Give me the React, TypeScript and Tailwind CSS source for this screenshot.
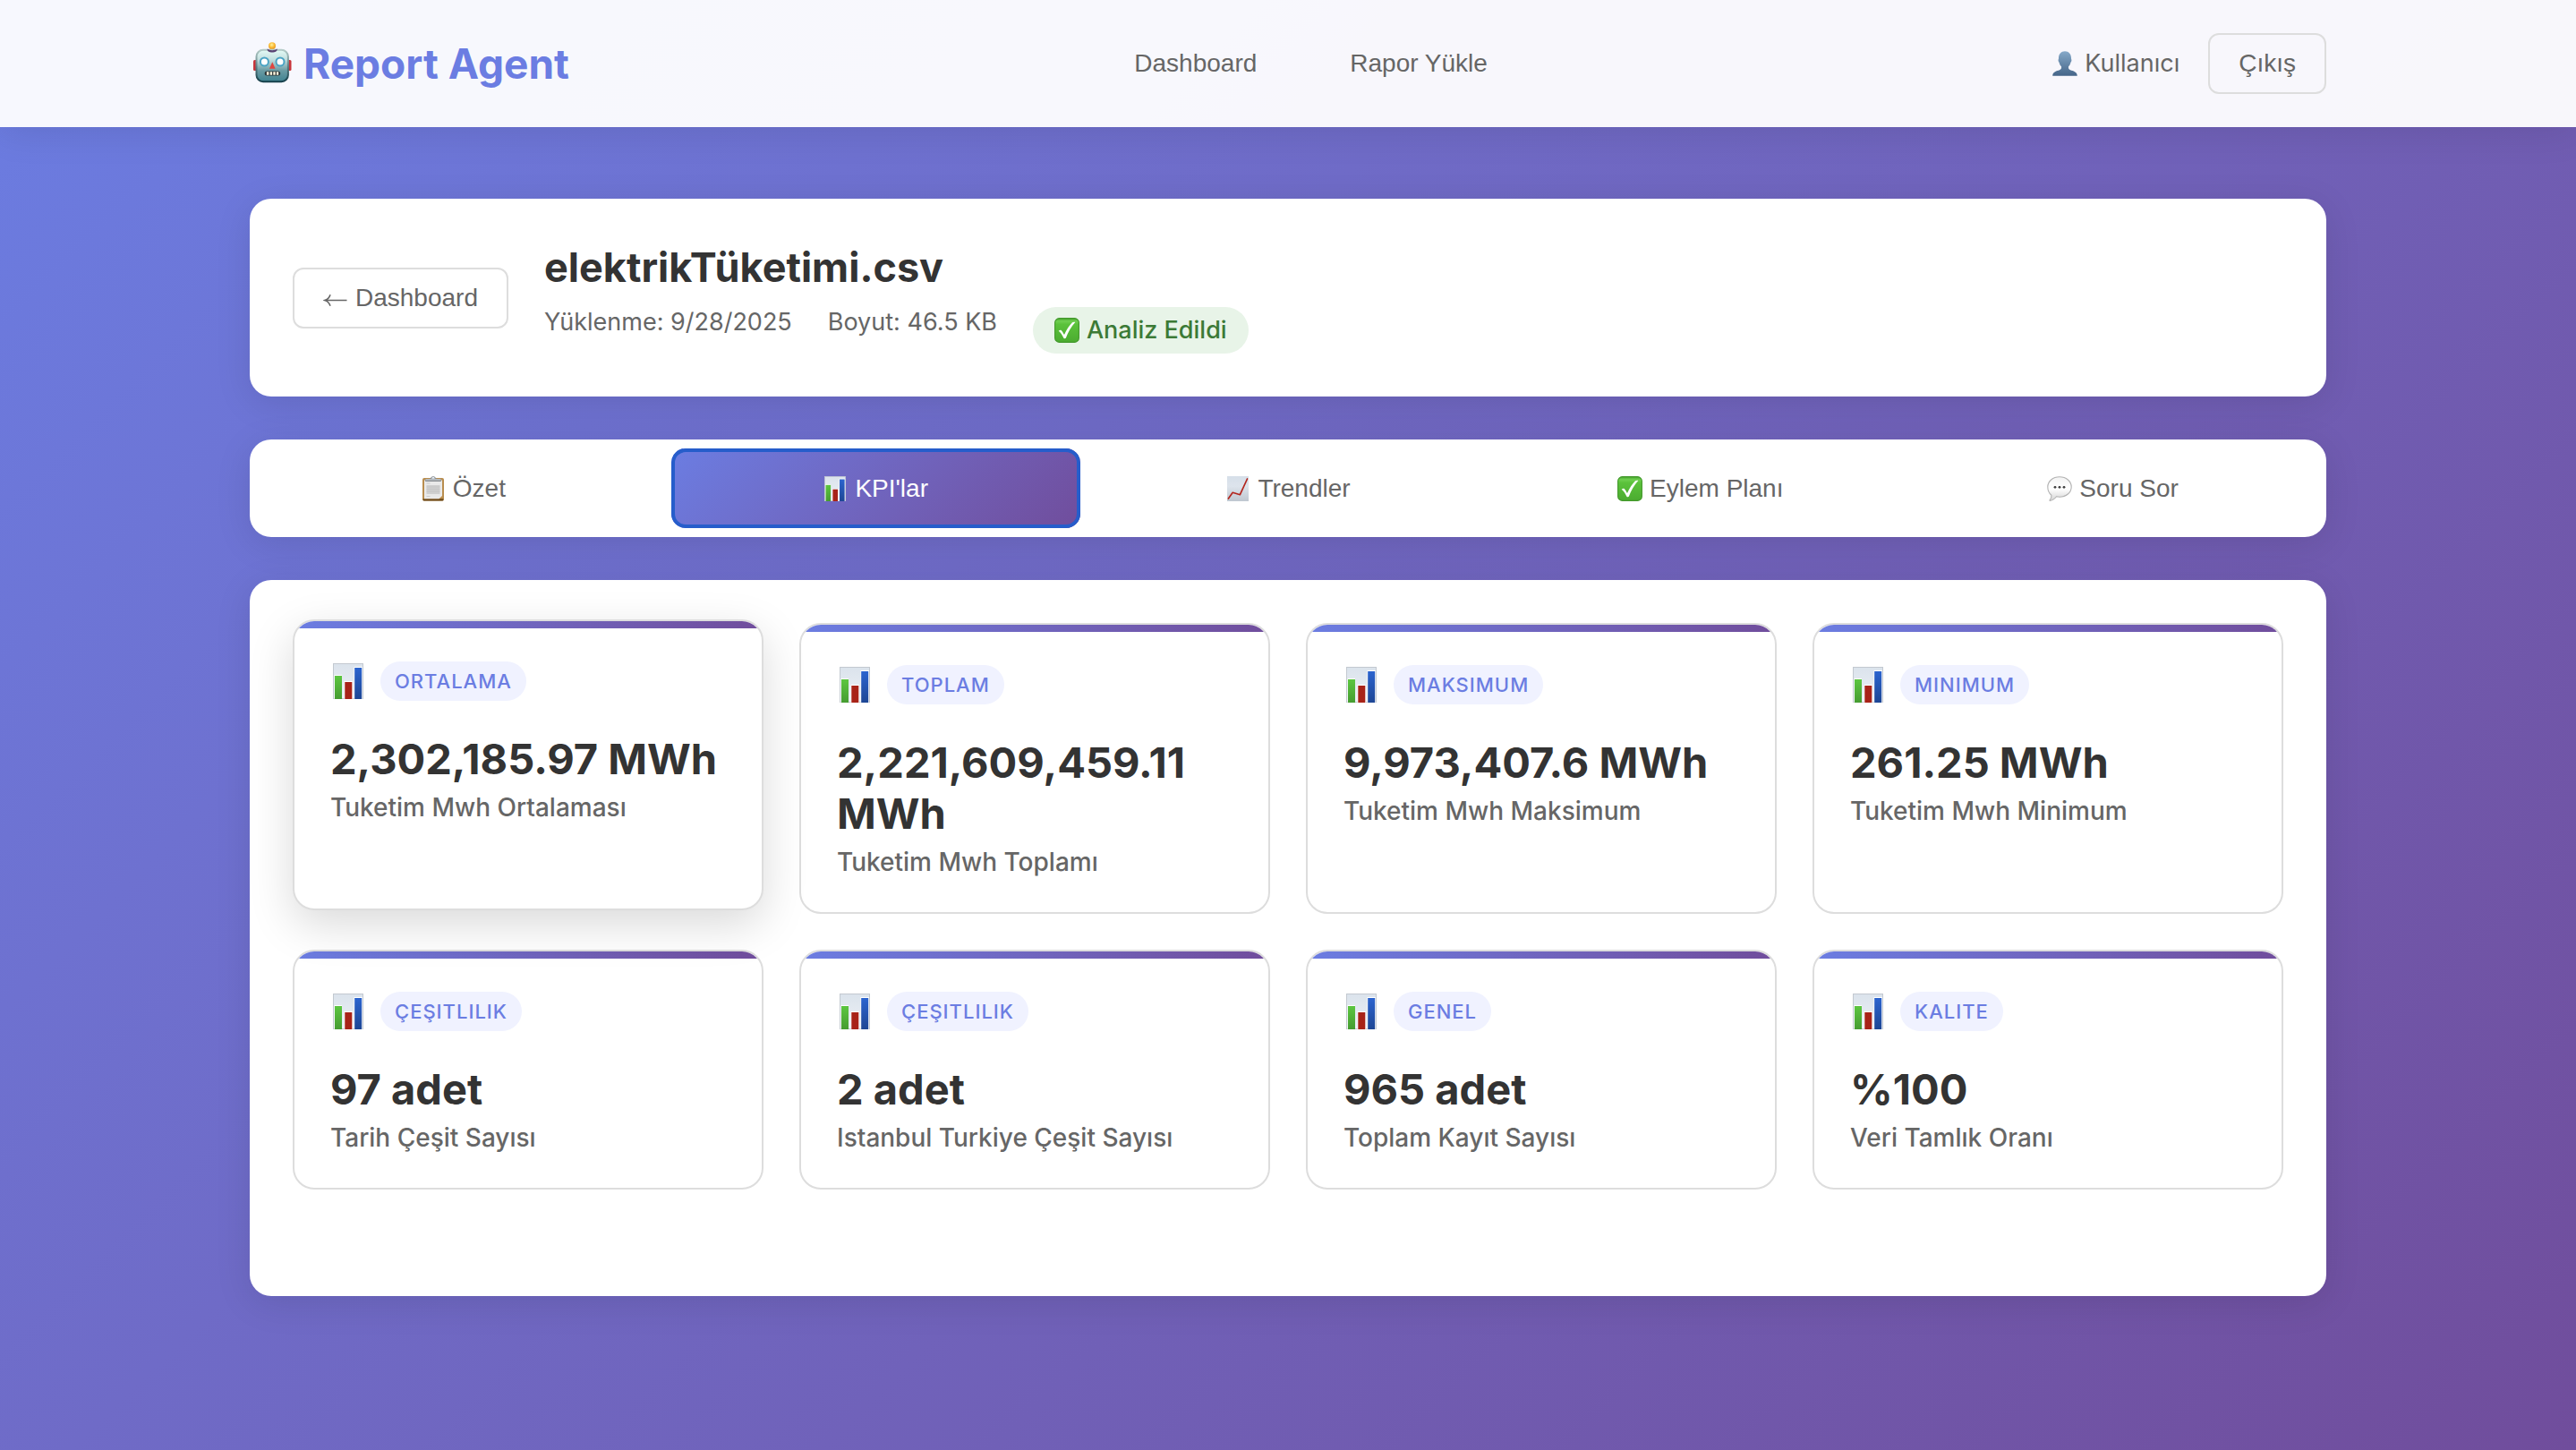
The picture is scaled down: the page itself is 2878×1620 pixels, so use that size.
import type { ReactNode } from 'react';

function RobotIcon() {
  return (
    <svg viewBox="0 0 48 48" className="size-12 shrink-0" aria-hidden="true">
      <defs>
        <linearGradient id="robotFace" x1="0" y1="0" x2="0" y2="1">
          <stop offset="0" stopColor="#e4fbf6" />
          <stop offset="0.3" stopColor="#c3dfdf" />
          <stop offset="0.65" stopColor="#6a9ba3" />
          <stop offset="1" stopColor="#3f8290" />
        </linearGradient>
        <linearGradient id="robotEdge" x1="0" y1="0" x2="0" y2="1">
          <stop offset="0" stopColor="#b4cbc8" />
          <stop offset="0.6" stopColor="#4d747b" />
          <stop offset="1" stopColor="#16404b" />
        </linearGradient>
        <radialGradient id="robotLamp" cx="0.45" cy="0.35" r="0.7">
          <stop offset="0" stopColor="#fff3a0" />
          <stop offset="0.5" stopColor="#fbbc35" />
          <stop offset="1" stopColor="#e08a1c" />
        </radialGradient>
      </defs>
      <circle cx="25" cy="4.300" r="4" fill="url(#robotLamp)" />
      <rect x="4" y="20" width="5" height="12" rx="1.500" fill="#c8343a" />
      <rect x="41.500" y="20" width="5" height="12" rx="1.500" fill="#c8343a" />
      <rect x="7.500" y="8.800" width="35.400" height="35.400" rx="7.500" fill="url(#robotFace)" stroke="url(#robotEdge)" strokeWidth="2" />
      <path d="M19.700 7.500c1.500 1.200 3.300 1.700 5.450 1.700s3.950-.5 5.450-1.700c.6 2.600-2.200 4-5.450 4s-6.050-1.400-5.450-4Z" fill="#5a4373" />
      <circle cx="16.400" cy="22" r="4.500" fill="#fff" stroke="#4aa3c4" strokeWidth="2" />
      <circle cx="34" cy="22" r="4.500" fill="#fff" stroke="#4aa3c4" strokeWidth="2" />
      <path d="m25.300 22.200 3.300 7.600H22Z" fill="#e0453f" />
      <rect x="16.700" y="32.500" width="17.500" height="5" rx="2.500" fill="#2b3437" />
      <path d="M18.900 33.300h2.500v3.400h-2.500zM22.700 33.300h2.400v3.400h-2.400zM26.300 33.300h2.400v3.400h-2.400zM29.900 33.300h2.300v3.400h-2.300z" fill="#fff6dc" />
    </svg>
  );
}

function PersonIcon() {
  return (
    <svg viewBox="0 0 28 28" className="size-7 shrink-0" aria-hidden="true">
      <defs>
        <linearGradient id="person" x1="0" y1="0" x2="0" y2="1">
          <stop offset="0" stopColor="#86a9c9" />
          <stop offset="1" stopColor="#456588" />
        </linearGradient>
      </defs>
      <path
        d="M14 .3c4.300 0 7 3.200 7 7.700 0 1.200.5 1.500.4 2.700-.1 1.100-.8 1.500-1.100 2.500-.5 1.900-1.300 3.100-2.300 4.100-.3 1.800.2 3.300 2 4 3.300 1.200 7.500 1.700 7.800 6.400H.2c.3-4.700 4.500-5.200 7.800-6.400 1.800-.7 2.300-2.200 2-4-1-1-1.800-2.200-2.300-4.100-.3-1-1-1.400-1.100-2.500C6.500 9.500 7 9.200 7 8 7 3.500 9.700.3 14 .3Z"
        fill="url(#person)"
      />
    </svg>
  );
}

function ArrowLeftIcon() {
  return (
    <svg viewBox="0 0 28 28" className="size-7 shrink-0" aria-hidden="true">
      <path d="M2.500 16.500h24M8 10.200c-1 3.300-2.800 5.300-6.300 6.300 3.500 1 5.300 3 6.300 6.300" fill="none" stroke="currentColor" strokeWidth="1.600" />
    </svg>
  );
}

function CheckIcon() {
  return (
    <svg viewBox="0 0 28 28" className="size-7 shrink-0" aria-hidden="true">
      <defs>
        <linearGradient id="check" x1="0" y1="0" x2="0" y2="1">
          <stop offset="0" stopColor="#45a52c" />
          <stop offset="0.12" stopColor="#6fcf50" />
          <stop offset="0.25" stopColor="#5bc23b" />
          <stop offset="1" stopColor="#4bab30" />
        </linearGradient>
      </defs>
      <rect x="0.600" y="0.600" width="26.800" height="26.800" rx="5" fill="url(#check)" stroke="#43982c" strokeWidth="1.100" />
      <path d="M4.700 14.800c1-1 2.200-1.500 3-.8 1.100 1 2 2.900 3.300 5C13.800 12.800 16.700 8.600 20 5.300c.6-.6 2.600-.7 3.300-.3-4.700 5-7.900 10.900-10.400 17.500-.4 1-2 1.100-2.500.2-1.800-3.500-3.300-6.300-5.700-7.900Z" fill="#fff" />
    </svg>
  );
}

function ClipboardIcon() {
  return (
    <svg viewBox="0 0 28 28" className="size-7 shrink-0" aria-hidden="true">
      <rect x="2" y="2" width="24" height="25.600" rx="2" fill="#b98d4e" />
      <rect x="2.500" y="25.300" width="23" height="2.200" rx="1" fill="#6d4a1c" />
      <path d="M4 4.500h20V22l-3.500 3.300H4Z" fill="#e9e9e9" />
      <path d="M6.500 10h15v10h-15z" fill="#cfcfcf" />
      <path d="M6.500 8h4M6.500 22.500h4M6.500 12h15M6.500 14.500h15M6.500 17h15" stroke="#c0c0c0" strokeWidth="0.700" />
      <path d="M5 3.200c3 0 5.500 0 6.200-1.200C11.700.8 12.600.2 14 .2s2.300.6 2.800 1.800C17.500 3.200 20 3.200 23 3.200V5c0 .6-.4 1-1 1H6c-.6 0-1-.4-1-1Z" fill="#8b8f94" />
      <path d="M5.500 3.300h17v1.200h-17z" fill="#c9ced3" />
      <path d="M12.300 2.800c0-1.300.6-1.900 1.700-1.900s1.700.6 1.700 1.900Z" fill="#e6eef5" />
    </svg>
  );
}

function BarChartIcon({ className }: { className: string }) {
  return (
    <svg viewBox="0 0 40 40" className={className} aria-hidden="true">
      <defs>
        <linearGradient id="chartPaper" x1="0" y1="0" x2="0" y2="1">
          <stop offset="0" stopColor="#dbe3ec" />
          <stop offset="1" stopColor="#edf1f6" />
        </linearGradient>
        <linearGradient id="barGreen" x1="0" y1="0" x2="0" y2="1">
          <stop offset="0" stopColor="#5cc640" />
          <stop offset="1" stopColor="#469c31" />
        </linearGradient>
        <linearGradient id="barBlue" x1="0" y1="0" x2="0" y2="1">
          <stop offset="0" stopColor="#2c64cf" />
          <stop offset="1" stopColor="#1d4694" />
        </linearGradient>
      </defs>
      <rect x="3.500" y="0.500" width="33" height="39" fill="url(#chartPaper)" stroke="#c3c9d0" />
      <path d="M4.500 13h8.500v27H4.500zM15.500 20H25v20h-9.500zM26.500 4h9.500v36h-9.500z" fill="#fff" />
      <rect x="5" y="14" width="8" height="26" fill="url(#barGreen)" />
      <rect x="16.300" y="21" width="8" height="19" fill="#a82318" />
      <rect x="27.200" y="5" width="8" height="35" fill="url(#barBlue)" />
    </svg>
  );
}

function TrendIcon() {
  return (
    <svg viewBox="0 0 28 28" className="size-7 shrink-0" aria-hidden="true">
      <defs>
        <linearGradient id="trendPaper" x1="0" y1="0" x2="0" y2="1">
          <stop offset="0" stopColor="#d6dfe9" />
          <stop offset="0.4" stopColor="#dde4ec" />
          <stop offset="1" stopColor="#bfc7d0" />
        </linearGradient>
      </defs>
      <rect x="2" y="0" width="24" height="28" fill="url(#trendPaper)" />
      <path d="m3.400 25 4.800-6.700 8.200 2.400L24.500 3" fill="none" stroke="#b3261e" strokeWidth="1.700" strokeLinejoin="round" strokeLinecap="round" />
    </svg>
  );
}

function SpeechIcon() {
  return (
    <svg viewBox="0 0 28 28" className="size-7 shrink-0" aria-hidden="true">
      <defs>
        <linearGradient id="speech" x1="0" y1="0" x2="0" y2="1">
          <stop offset="0" stopColor="#f3f3f3" />
          <stop offset="0.5" stopColor="#ffffff" />
          <stop offset="1" stopColor="#d4d4d4" />
        </linearGradient>
      </defs>
      <path
        d="M14 .8C21.300.8 27.200 5.600 27.200 12S21.300 23.200 14 23.200c-1.200 0-2.400-.1-3.500-.4-1.700 2.400-4.300 4.200-7.200 4.600-.4 0-.5-.4-.2-.7 1.300-1.400 2-3.500 1.800-5.500C2.400 19.200.8 15.900.8 12 .8 5.600 6.700.8 14 .8Z"
        fill="url(#speech)"
        stroke="#b2b2b2"
        strokeWidth="1.100"
      />
      <circle cx="9" cy="12.300" r="1.400" fill="#3c3c3c" />
      <circle cx="14" cy="12.300" r="1.400" fill="#3c3c3c" />
      <circle cx="19" cy="12.300" r="1.400" fill="#3c3c3c" />
    </svg>
  );
}

const tabs: { label: string; icon: ReactNode; active?: boolean }[] = [
  { label: 'Özet', icon: <ClipboardIcon /> },
  { label: "KPI'lar", icon: <BarChartIcon className="size-7 shrink-0" />, active: true },
  { label: 'Trendler', icon: <TrendIcon /> },
  { label: 'Eylem Planı', icon: <CheckIcon /> },
  { label: 'Soru Sor', icon: <SpeechIcon /> },
];

const kpis = [
  { tag: 'ORTALAMA', value: '2,302,185.97 MWh', label: 'Tuketim Mwh Ortalaması', raised: true },
  { tag: 'TOPLAM', value: '2,221,609,459.11 MWh', label: 'Tuketim Mwh Toplamı' },
  { tag: 'MAKSIMUM', value: '9,973,407.6 MWh', label: 'Tuketim Mwh Maksimum' },
  { tag: 'MINIMUM', value: '261.25 MWh', label: 'Tuketim Mwh Minimum' },
  { tag: 'ÇEŞITLILIK', value: '97 adet', label: 'Tarih Çeşit Sayısı' },
  { tag: 'ÇEŞITLILIK', value: '2 adet', label: 'Istanbul Turkiye Çeşit Sayısı' },
  { tag: 'GENEL', value: '965 adet', label: 'Toplam Kayıt Sayısı' },
  { tag: 'KALITE', value: '%100', label: 'Veri Tamlık Oranı' },
];

const outlineButton =
  "flex cursor-pointer items-center gap-2 rounded-xl border-2 border-[#ddd] px-8 py-4 font-['Liberation_Sans',Arial,sans-serif] text-[28px] leading-8 text-[#666]";

function KpiCard({ tag, value, label, raised }: { tag: string; value: string; label: string; raised?: boolean }) {
  return (
    <article
      className={
        'overflow-hidden rounded-3xl border-2 border-[#ddd] bg-white ' +
        (raised ? '-translate-y-1 shadow-[0_16px_50px_rgba(0,0,0,0.15)]' : '')
      }
    >
      <div className="h-2 bg-linear-to-r from-[#6b7de2] to-[#704d9c]" />
      <div className="px-10 pt-8 pb-[38px]">
        <div className="mb-8 flex h-[53px] items-center gap-4">
          <BarChartIcon className="size-10 shrink-0" />
          <span className="rounded-full bg-[#f0f2ff] px-4 py-2 text-[22px] leading-7 font-medium tracking-[1px] text-[#6b7de2]">
            {tag}
          </span>
        </div>
        <p className="mb-2 text-[47px] leading-[57px] font-bold text-[#333]">{value}</p>
        <p className="text-[28px] leading-9 font-medium text-[#666]">{label}</p>
      </div>
    </article>
  );
}

export default function App() {
  return (
    <div className="min-h-screen bg-linear-135 from-[#6b7de2] to-[#704d9c] font-[Inter,sans-serif] text-[27px] leading-[34px] text-[#333]">
      <header className="bg-white/95 shadow-[0_4px_40px_rgba(0,0,0,0.1)]">
        <div className="mx-auto flex max-w-[2400px] items-center justify-between px-10 py-9">
          <a href="#" className="flex items-center gap-3 text-[46px] leading-[70px] font-bold text-[#6b7de2]">
            <RobotIcon />
            Report Agent
          </a>
          <nav className="flex gap-10 font-['Liberation_Sans',Arial,sans-serif] text-[28px] text-[#666]">
            <a href="#" className="px-8">Dashboard</a>
            <a href="#" className="px-8">Rapor Yükle</a>
          </nav>
          <div className="flex items-center gap-8">
            <span className="flex items-center gap-2 text-[#666]">
              <PersonIcon />
              Kullanıcı
            </span>
            <button type="button" className={outlineButton}>Çıkış</button>
          </div>
        </div>
      </header>

      <main className="mx-auto flex max-w-[2400px] flex-col gap-12 px-10 py-20">
        <section className="flex items-center gap-10 rounded-3xl bg-white p-12 shadow-[0_8px_40px_rgba(0,0,0,0.1)]">
          <button type="button" className={outlineButton}>
            <ArrowLeftIcon />
            Dashboard
          </button>
          <div>
            <h1 className="mb-[15px] text-[45px] leading-[58px] font-bold">elektrikTüketimi.csv</h1>
            <div className="flex items-start gap-10 text-[#666]">
              <span>Yüklenme: 9/28/2025</span>
              <span>Boyut: 46.5 KB</span>
              <span className="flex items-center gap-2 rounded-full bg-[#e8f4e8] px-6 py-[9px] font-medium text-[#3c7a36]">
                <CheckIcon />
                Analiz Edildi
              </span>
            </div>
          </div>
        </section>

        <div role="tablist" className="grid grid-cols-5 gap-1 rounded-3xl bg-white p-2.5 shadow-[0_8px_40px_rgba(0,0,0,0.1)]">
          {tabs.map((tab) => (
            <button
              key={tab.label}
              type="button"
              role="tab"
              aria-selected={!!tab.active}
              className={
                "flex cursor-pointer items-center justify-center gap-2 rounded-2xl px-8 py-7 font-['Liberation_Sans',Arial,sans-serif] text-[28px] leading-[33px] " +
                (tab.active
                  ? 'bg-linear-135 from-[#6b7de2] to-[#704d9c] text-white outline-4 -outline-offset-4 outline-[#265dcb]'
                  : 'text-[#666]')
              }
            >
              {tab.icon}
              {tab.label}
            </button>
          ))}
        </div>

        <section className="min-h-[800px] rounded-3xl bg-white p-12 shadow-[0_8px_40px_rgba(0,0,0,0.1)]">
          <div className="grid grid-cols-4 gap-10">
            {kpis.map((kpi) => (
              <KpiCard key={kpi.label} {...kpi} />
            ))}
          </div>
        </section>
      </main>
    </div>
  );
}
